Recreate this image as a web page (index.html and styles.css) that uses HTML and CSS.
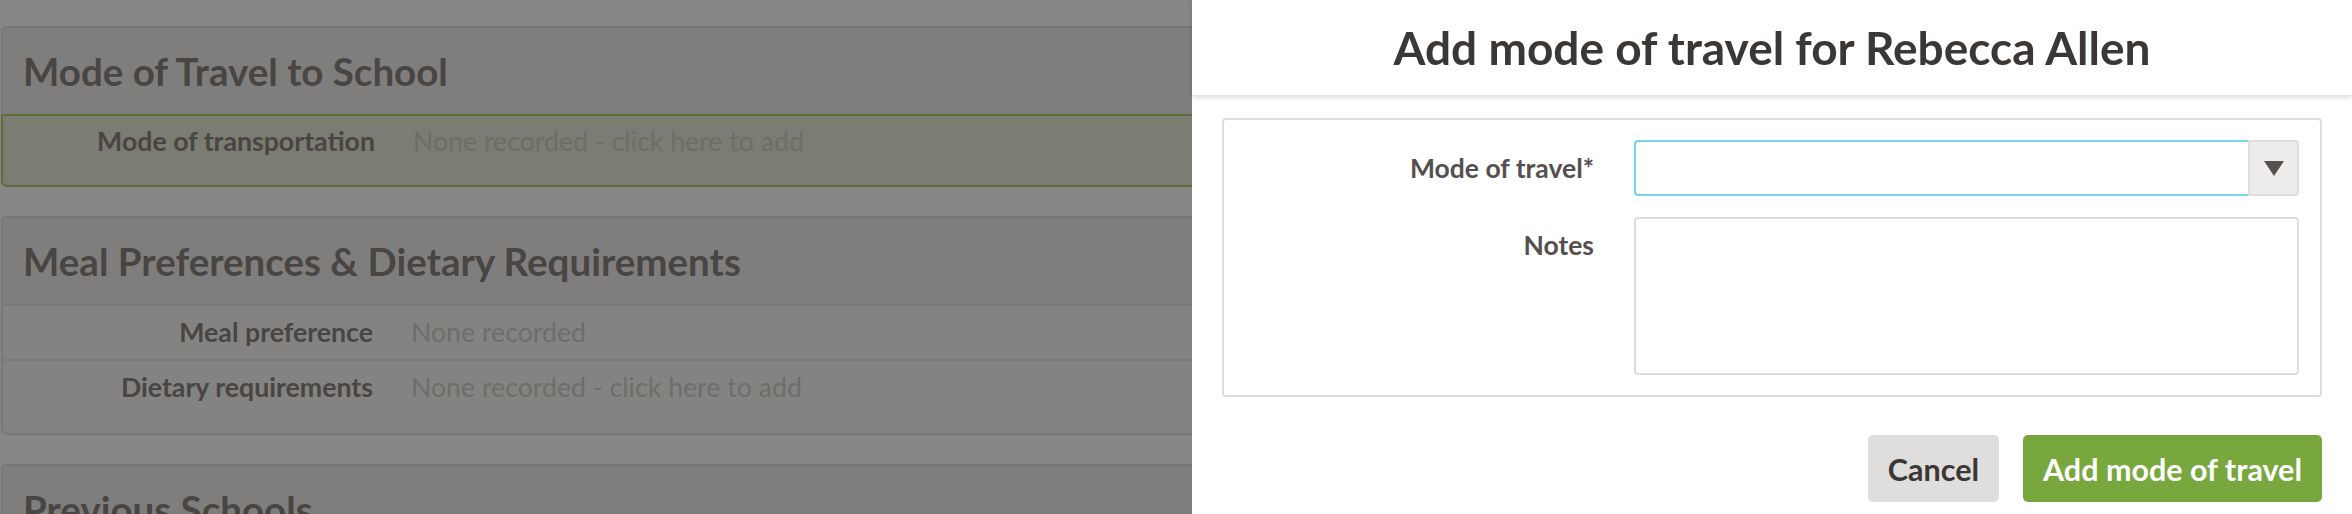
FILE: index.html
```html
<!DOCTYPE html>
<html lang="en">
<head>
<meta charset="utf-8">
<title>Add mode of travel</title>
<link rel="stylesheet" href="styles.css">
</head>
<body>
<main class="page">
  <section class="card">
    <h2 class="card-title">Mode of Travel to School</h2>
    <div class="field-row field-row--active">
      <span class="field-label">Mode of transportation</span>
      <span class="field-value">None recorded - click here to add</span>
    </div>
  </section>
  <section class="card">
    <h2 class="card-title">Meal Preferences &amp; Dietary Requirements</h2>
    <div class="field-row">
      <span class="field-label">Meal preference</span>
      <span class="field-value">None recorded</span>
    </div>
    <div class="field-row field-row--last">
      <span class="field-label">Dietary requirements</span>
      <span class="field-value">None recorded - click here to add</span>
    </div>
  </section>
  <section class="card">
    <h2 class="card-title">Previous Schools</h2>
  </section>
</main>

<aside class="modal" role="dialog" aria-labelledby="modal-title">
  <header class="modal-header">
    <h1 id="modal-title" class="modal-title">Add mode of travel for Rebecca Allen</h1>
  </header>
  <div class="modal-body">
    <form class="form-box">
      <label class="form-label" for="mode">Mode of travel*</label>
      <div class="select">
        <div class="select-input" id="mode" tabindex="0"></div>
        <div class="select-arrow"><span class="triangle"></span></div>
      </div>
      <label class="form-label" for="notes">Notes</label>
      <textarea class="textarea" id="notes"></textarea>
    </form>
    <div class="actions">
      <button class="btn btn--cancel" type="button">Cancel</button>
      <button class="btn btn--primary" type="button">Add mode of travel</button>
    </div>
  </div>
</aside>
</body>
</html>
```

FILE: styles.css
```css
* { box-sizing: border-box; }

html, body {
  margin: 0;
  height: 100%;
}

body {
  background: #888786;
  font-family: "Lato", "Open Sans", sans-serif;
  overflow: hidden;
}

.page {
  padding: 26px 0 0 1px;
  width: 1240px;
  display: flex;
  flex-direction: column;
  gap: 29px;
}

.card {
  border: 2px solid #787775;
  border-radius: 6px;
  background: #848381;
}

.card-title {
  margin: 0;
  height: 86px;
  padding: 0 20px;
  display: flex;
  align-items: center;
  font-size: 38.5px;
  font-weight: 700;
  color: #494543;
  background: #7f7e7c;
  border-radius: 4px 4px 0 0;
}

.field-row {
  display: flex;
  align-items: baseline;
  gap: 38px;
  border-top: 2px solid #7a7977;
  padding: 11px 0 12px;
  line-height: 30px;
  font-size: 26.7px;
}

.field-row--last {
  padding-bottom: 31px;
}

.field-row--active {
  margin: 0 -2px -2px;
  border: 2px solid #5b6f3c;
  border-radius: 0 0 6px 6px;
  background: #7b7c72;
  padding: 10px 0 23px;
  height: 73px;
}

.field-label {
  width: 370px;
  flex: none;
  text-align: right;
  font-weight: 700;
  color: #494543;
}

.field-row--active .field-label {
  width: 372px;
}

.field-value {
  color: #6f6d6a;
}

/* Modal */
.modal {
  position: fixed;
  top: 0;
  right: 0;
  bottom: 0;
  width: 1160px;
  background: #ffffff;
  display: flex;
  flex-direction: column;
}

.modal-header {
  height: 95px;
  flex: none;
  display: flex;
  align-items: center;
  justify-content: center;
  box-shadow: 0 2px 6px rgba(0, 0, 0, 0.16);
  position: relative;
  z-index: 1;
}

.modal-title {
  margin: 0;
  font-size: 46px;
  font-weight: 700;
  color: #3b3735;
}

.modal-body {
  padding: 23px 30px 0;
}

.form-box {
  margin: 0;
  border: 2px solid #dddddd;
  border-radius: 4px;
  padding: 20px 21px 20px 0;
  display: grid;
  grid-template-columns: 370px 1fr;
  column-gap: 40px;
  row-gap: 21px;
}

.form-label {
  text-align: right;
  font-size: 26.5px;
  font-weight: 700;
  line-height: 56px;
  color: #55504e;
}

.select {
  display: flex;
  height: 56px;
}

.select-input {
  flex: 1;
  border: 2px solid #7ad2ef;
  border-right: none;
  border-radius: 4px 0 0 4px;
}

.select-arrow {
  width: 51px;
  flex: none;
  background: #eeedeb;
  border: 2px solid #dfdedc;
  border-radius: 0 4px 4px 0;
  display: flex;
  align-items: center;
  justify-content: center;
}

.triangle {
  width: 0;
  height: 0;
  border-left: 10px solid transparent;
  border-right: 10px solid transparent;
  border-top: 15px solid #57524f;
}

.textarea {
  height: 158px;
  border: 2px solid #dddcdb;
  border-radius: 4px;
  resize: none;
  font: inherit;
}

.actions {
  display: flex;
  justify-content: flex-end;
  gap: 24px;
  margin-top: 38px;
}

.btn {
  height: 67px;
  border: none;
  border-radius: 5px;
  padding: 0 20px;
  font-family: inherit;
  font-size: 30.5px;
  font-weight: 700;
}

.btn--cancel {
  background: #dfdedd;
  color: #3b3735;
}

.btn--primary {
  background: #78a73e;
  color: #ffffff;
}
```
